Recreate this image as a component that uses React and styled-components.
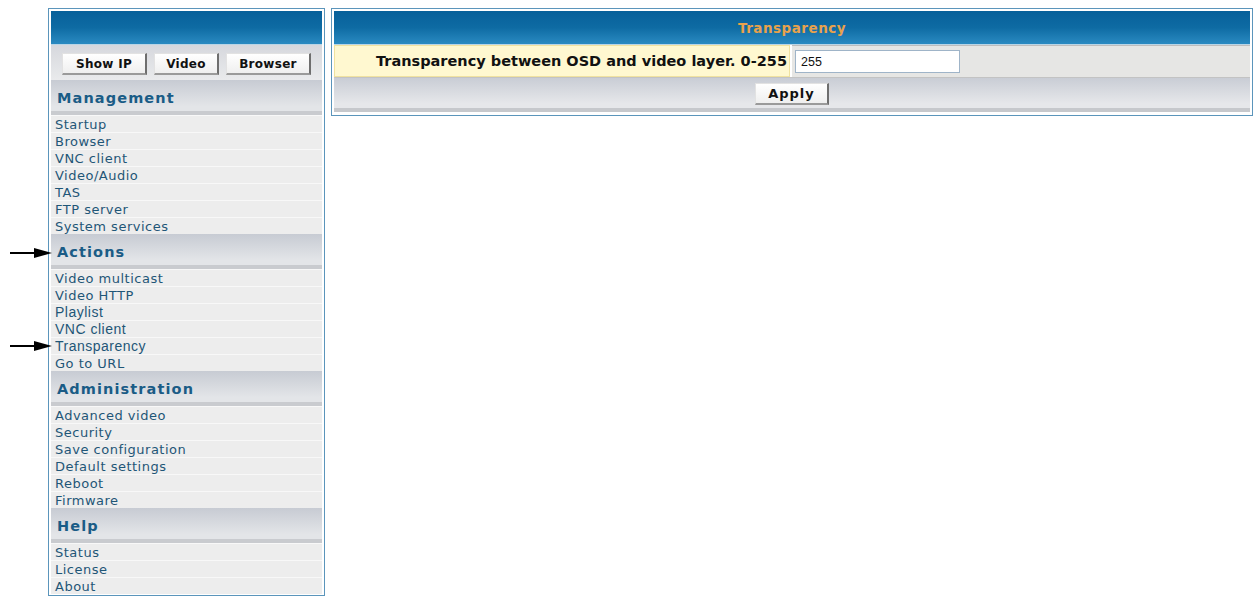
import React from "react";
import styled, { createGlobalStyle } from "styled-components";

const GlobalStyle = createGlobalStyle`
  html, body {
    margin: 0;
    padding: 0;
    background: #fff;
  }
  body {
    font-family: "DejaVu Sans", Verdana, sans-serif;
  }
`;

const menu = [
  {
    title: "Management",
    items: [
      { label: "Startup" },
      { label: "Browser" },
      { label: "VNC client" },
      { label: "Video/Audio" },
      { label: "TAS" },
      { label: "FTP server" },
      { label: "System services" },
    ],
  },
  {
    title: "Actions",
    arrow: true,
    items: [
      { label: "Video multicast" },
      { label: "Video HTTP" },
      { label: "Playlist", alt: true },
      { label: "VNC client", alt: true },
      { label: "Transparency", alt: true, arrow: true },
      { label: "Go to URL" },
    ],
  },
  {
    title: "Administration",
    items: [
      { label: "Advanced video" },
      { label: "Security" },
      { label: "Save configuration" },
      { label: "Default settings" },
      { label: "Reboot" },
      { label: "Firmware" },
    ],
  },
  {
    title: "Help",
    items: [{ label: "Status" }, { label: "License" }, { label: "About" }],
  },
];

function Arrow({ shift = 0 }) {
  return (
    <ArrowMark $shift={shift} width="42" height="12" viewBox="0 0 42 12">
      <line x1="0" y1="6" x2="28" y2="6" stroke="#000" strokeWidth="2" />
      <polygon points="24,1 42,6 24,11" fill="#000" />
    </ArrowMark>
  );
}

function App() {
  return (
    <>
      <GlobalStyle />
      <Page>
        <Sidebar>
          <BlueBar />
          <ButtonRow>
            <NavButton $w={85}>Show IP</NavButton>
            <NavButton $w={65}>Video</NavButton>
            <NavButton $w={85}>Browser</NavButton>
          </ButtonRow>
          {menu.map((group) => (
            <Group key={group.title}>
              <GroupHead>
                {group.arrow && <Arrow shift={3} />}
                {group.title}
              </GroupHead>
              {group.items.map((item) => (
                <MenuItem key={item.label + group.title} $alt={item.alt}>
                  {item.arrow && <Arrow />}
                  {item.label}
                </MenuItem>
              ))}
            </Group>
          ))}
        </Sidebar>
        <Main>
          <BlueBar>
            <PanelTitle>Transparency</PanelTitle>
          </BlueBar>
          <FieldRow>
            <FieldLabel>Transparency between OSD and video layer. 0-255</FieldLabel>
            <FieldCell>
              <TextInput defaultValue="255" />
            </FieldCell>
          </FieldRow>
          <ActionRow>
            <NavButton $w={74} $size={13}>
              Apply
            </NavButton>
          </ActionRow>
        </Main>
      </Page>
    </>
  );
}

const Page = styled.div`
  display: flex;
  align-items: flex-start;
  gap: 6px;
  padding: 8px 4px 0 48px;
`;

const Panel = styled.div`
  border: 1px solid #5b95bb;
  padding: 2px;
  background: #fff;
  box-sizing: border-box;
  display: flex;
  flex-direction: column;
`;

const Sidebar = styled(Panel)`
  position: relative;
  width: 277px;
  flex: none;
  padding-bottom: 1px;
`;

const Main = styled(Panel)`
  flex: 1;
  padding-bottom: 3px;
`;

const BlueBar = styled.div`
  height: 33px;
  background: linear-gradient(#07609a 0%, #0e6ba3 50%, #2a8ac1 100%);
  border-bottom: 1px solid #b9d5e6;
  display: flex;
  align-items: center;
  justify-content: center;
`;

const PanelTitle = styled.span`
  color: #e8a24c;
  font-weight: bold;
  font-size: 13.5px;
  letter-spacing: 0.5px;
`;

const ButtonRow = styled.div`
  height: 35px;
  background: linear-gradient(#d6d8dd, #e9eaec);
  display: flex;
  align-items: center;
  justify-content: center;
  gap: 7px;
  padding-top: 3px;
  box-sizing: border-box;
`;

const NavButton = styled.button`
  width: ${(p) => p.$w}px;
  height: 22px;
  padding: 0;
  background: linear-gradient(#ffffff, #efefef);
  border: none;
  border-left: 1px solid #e2e2e2;
  border-top: 1px solid #e2e2e2;
  border-right: 2px solid #6e6e6e;
  border-bottom: 2px solid #9a9a9a;
  font-family: "DejaVu Sans", Verdana, sans-serif;
  font-weight: bold;
  font-size: ${(p) => p.$size || 12}px;
  letter-spacing: ${(p) => (p.$size ? 1 : 0.3)}px;
  color: #111;
  cursor: pointer;
`;

const Group = styled.div`
  display: flex;
  flex-direction: column;
`;

const GroupHead = styled.div`
  position: relative;
  height: 35px;
  box-sizing: border-box;
  background: linear-gradient(#c7cbd3, #e3e5e8 85%);
  border-bottom: 4px solid #c9cbcf;
  display: flex;
  align-items: center;
  padding: 5px 0 0 6px;
  color: #1a5c86;
  font-weight: bold;
  font-size: 14.5px;
  letter-spacing: 1.1px;
`;

const MenuItem = styled.div`
  position: relative;
  height: 17px;
  box-sizing: border-box;
  background: #ededed;
  border-top: 1px solid #f8f8f8;
  padding-left: 4px;
  display: flex;
  align-items: center;
  color: #1f5677;
  font-family: ${(p) =>
    p.$alt ? '"Liberation Sans", Arial, sans-serif' : '"DejaVu Sans", Verdana, sans-serif'};
  font-size: ${(p) => (p.$alt ? "14px" : "13px")};
  letter-spacing: 0.5px;
  white-space: nowrap;
`;

const ArrowMark = styled.svg`
  position: absolute;
  left: -41px;
  top: calc(50% + ${(p) => p.$shift}px);
  transform: translateY(-50%);
`;

const FieldRow = styled.div`
  display: flex;
  height: 32px;
  border-bottom: 1px solid #c3c3c3;
`;

const FieldLabel = styled.div`
  width: 456px;
  flex: none;
  box-sizing: border-box;
  background: #fff8d0;
  border: 1px solid #f0e2a0;
  display: flex;
  align-items: center;
  justify-content: flex-end;
  padding-right: 2px;
  font-weight: bold;
  font-size: 14.5px;
  color: #111;
  white-space: nowrap;
`;

const FieldCell = styled.div`
  flex: 1;
  background: #e6e6e4;
  border-top: 1px solid #bdbdbd;
  margin-left: 2px;
  display: flex;
  align-items: center;
  padding-left: 3px;
`;

const TextInput = styled.input`
  width: 165px;
  height: 23px;
  box-sizing: border-box;
  border: 1px solid #9fb4c8;
  background: #fff;
  padding: 0 5px;
  font-family: "Liberation Sans", Arial, sans-serif;
  font-size: 12.5px;
  color: #111;
  outline: none;
`;

const ActionRow = styled.div`
  height: 34px;
  box-sizing: border-box;
  background: linear-gradient(#c9cdd5, #e6e7ea 85%);
  border-bottom: 4px solid #c6c8cc;
  display: flex;
  align-items: center;
  justify-content: center;
  padding-top: 2px;
`;

export default App;
